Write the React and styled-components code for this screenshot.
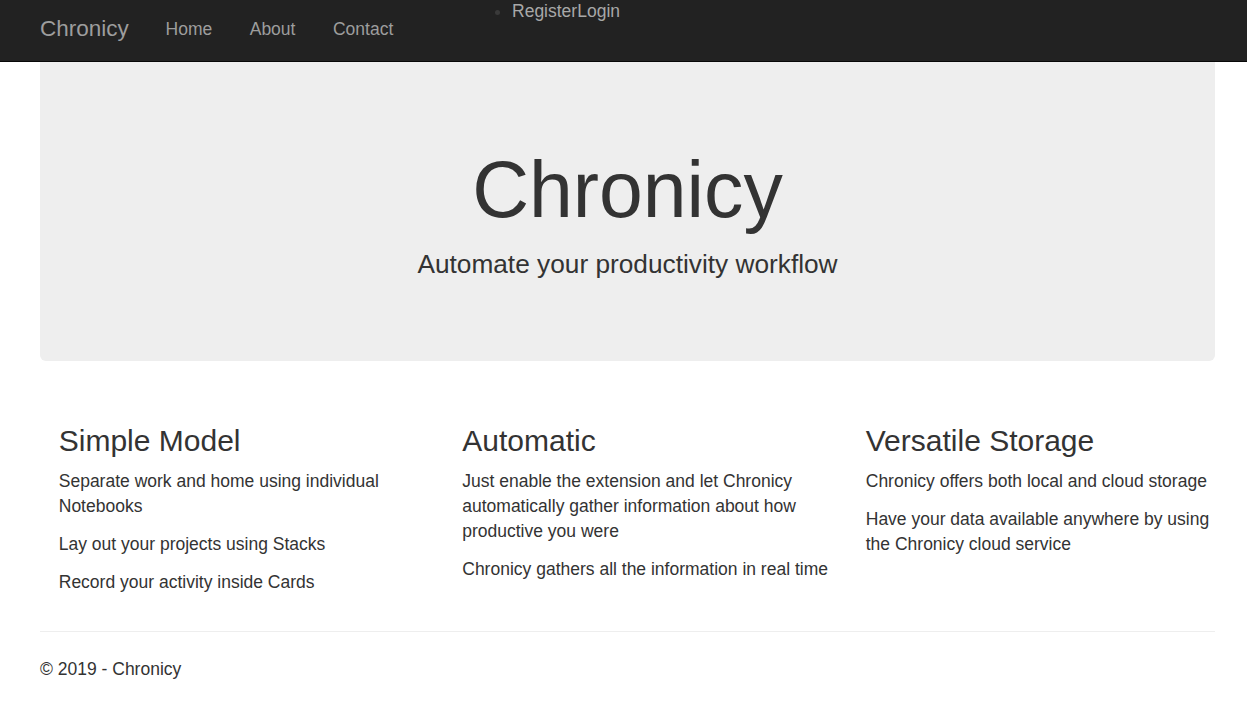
import React from 'react';
import styled, { createGlobalStyle } from 'styled-components';

const GlobalStyle = createGlobalStyle`
  html, body {
    margin: 0;
    padding: 0;
    background: #fff;
  }
  body {
    font-family: "Liberation Sans", Arial, Helvetica, sans-serif;
    font-size: 17.5px;
    line-height: 25px;
    color: #333;
  }
`;

const Navbar = styled.header`
  height: 61px;
  background: #222;
  border-bottom: 1px solid #080808;
  display: flex;
  align-items: flex-start;
  padding-left: 40px;
`;

const Brand = styled.a`
  font-size: 22.5px;
  line-height: 25px;
  color: #9d9d9d;
  padding: 16px 18px 0 0;
  text-decoration: none;
`;

const NavList = styled.ul`
  display: flex;
  margin: 0;
  padding: 0;
  list-style: none;
`;

const NavLink = styled.a`
  display: block;
  padding: 17px 18.75px 0;
  color: #9d9d9d;
  text-decoration: none;
  line-height: 25px;
`;

const LoginList = styled.ul`
  margin: 0 0 0 62px;
  padding: 0 0 0 38px;
  list-style: disc;
  color: #3a3a3a;
  line-height: 22px;
`;

const LoginLink = styled.a`
  color: #a8a8a8;
  text-decoration: none;
`;

const Jumbotron = styled.section`
  margin: 0 32px 0 40px;
  background: #eee;
  border-radius: 0 0 6px 6px;
  padding: 85px 60px 60px;
  text-align: center;
`;

const Title = styled.h1`
  margin: 0 0 12.5px;
  font-size: 78.75px;
  line-height: 1.1;
  font-weight: 400;
`;

const Lead = styled.p`
  margin: 0;
  font-size: 26.25px;
  line-height: 37.5px;
  padding-bottom: 17px;
`;

const Features = styled.div`
  display: grid;
  grid-template-columns: repeat(3, 403.5px);
  margin: 59px 0 0 40px;
`;

const Col = styled.div`
  padding: 0 18.75px;
`;

const ColTitle = styled.h2`
  margin: 0 0 8px;
  font-size: 30px;
  line-height: 41.25px;
  font-weight: 400;
`;

const Para = styled.p`
  margin: 0 0 13px;
`;

const Footer = styled.footer`
  margin: 23px 32px 0 40px;
  border-top: 1px solid #eee;
  padding-top: 25px;
`;

const features = [
  {
    title: 'Simple Model',
    items: [
      'Separate work and home using individual Notebooks',
      'Lay out your projects using Stacks',
      'Record your activity inside Cards',
    ],
  },
  {
    title: 'Automatic',
    items: [
      'Just enable the extension and let Chronicy automatically gather information about how productive you were',
      'Chronicy gathers all the information in real time',
    ],
  },
  {
    title: 'Versatile Storage',
    items: [
      'Chronicy offers both local and cloud storage',
      'Have your data available anywhere by using the Chronicy cloud service',
    ],
  },
];

export default function App() {
  return (
    <>
      <GlobalStyle />
      <Navbar>
        <Brand href="#">Chronicy</Brand>
        <NavList>
          <li><NavLink href="#">Home</NavLink></li>
          <li><NavLink href="#">About</NavLink></li>
          <li><NavLink href="#">Contact</NavLink></li>
        </NavList>
        <LoginList>
          <li>
            <LoginLink href="#">Register</LoginLink>
            <LoginLink href="#">Login</LoginLink>
          </li>
        </LoginList>
      </Navbar>
      <Jumbotron>
        <Title>Chronicy</Title>
        <Lead>Automate your productivity workflow</Lead>
      </Jumbotron>
      <Features>
        {features.map((f) => (
          <Col key={f.title}>
            <ColTitle>{f.title}</ColTitle>
            {f.items.map((t) => (
              <Para key={t}>{t}</Para>
            ))}
          </Col>
        ))}
      </Features>
      <Footer>
        <Para>&copy; 2019 - Chronicy</Para>
      </Footer>
    </>
  );
}
